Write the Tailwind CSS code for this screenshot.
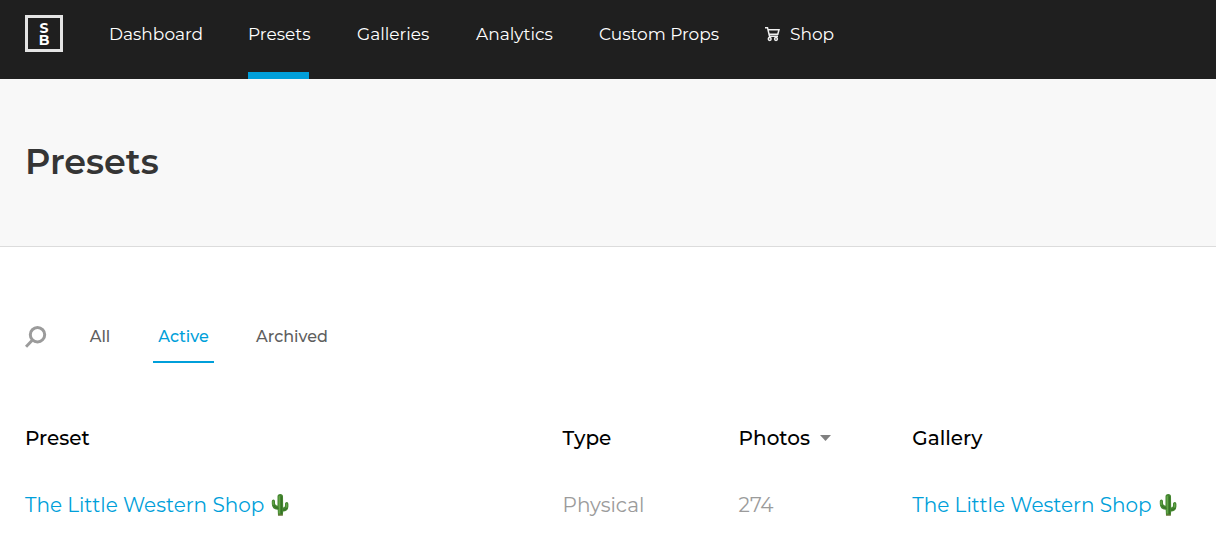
<!DOCTYPE html>
<html lang="en">
<head>
    <meta charset="UTF-8">
    <meta name="viewport" content="width=device-width, initial-scale=1.0">
    <script src="https://cdn.jsdelivr.net/npm/@tailwindcss/browser@4"></script>
    <title>Presets</title>
</head>
<body class="bg-white font-[Montserrat,Inter,sans-serif] text-black">
    <svg class="hidden">
        <symbol id="cactus" viewBox="0 0 18 24">
            <path d="M6.500 3.500Q6.500 1 9.200 1Q12 1 12 3.500L12.200 14.500Q14 14.300 14 12.500V10.500Q14.300 9 15.800 9Q17.400 9.200 17.400 11V13.500Q17.200 18 12.200 18.500L11.800 22.500H7L6.700 16.700Q1 16.500 0.800 11V8Q1 6.500 2.400 6.500Q4 6.700 4 8.300V10.500Q4.200 12.500 6.500 12.700Z" fill="#43852f"/>
            <path d="M8.300 20V3.500M2.200 11.500V8.500M15.600 14V11" fill="none" stroke="#62a548" stroke-width="1.400" stroke-linecap="round"/>
            <path d="M10.500 21V4M7.300 15.300Q4 15 3 13M12.500 17Q14.500 16.800 15.800 15.300" fill="none" stroke="#346f25" stroke-width="0.900" stroke-linecap="round"/>
            <path d="M7 22H11.800" stroke="#756f3c" stroke-width="1"/>
        </symbol>
    </svg>

    <header class="flex h-[79px] bg-[#1f1f1f] pl-[25px] text-[17px] text-white">
        <a href="#" aria-label="Home" class="mt-[15px] mr-[46px] flex h-[37px] w-[38px] flex-col items-center justify-center border-[3px] border-[#e4e4e4] text-[14px] leading-[12px] font-bold">
            <span>S</span>
            <span>B</span>
        </a>
        <nav class="flex gap-12 leading-[68px]">
            <a href="#" class="w-[91px]">Dashboard</a>
            <a href="#" class="w-[61px] border-b-[7px] border-[#009fda]">Presets</a>
            <a href="#" class="w-[71px]">Galleries</a>
            <a href="#" class="w-[75px]">Analytics</a>
            <a href="#" class="w-[118px] whitespace-nowrap">Custom Props</a>
            <a href="#" class="flex gap-[9px]">
                <svg class="mt-[26px] h-4 w-4" viewBox="0 0 16 16" fill="none" stroke="#f0f0f0" stroke-width="1.500">
                    <path d="M0 1.700H2.500L4.500 10.200H13M3 3.700H14L12.800 8.200H4"/>
                    <circle cx="4.700" cy="13" r="1.400"/>
                    <circle cx="11" cy="13" r="1.400"/>
                </svg>
                Shop
            </a>
        </nav>
    </header>

    <section class="flex h-[168px] items-center border-b border-[#dcdcdc] bg-[#f8f8f8] px-[25px] pb-[2px]">
        <h1 class="text-[35px] leading-[44px] font-semibold text-[#353535]">Presets</h1>
    </section>

    <main class="px-[25px] pt-[64px]">
        <div class="flex text-[16px] leading-[48px] font-medium text-[#5e5e5e]">
            <button type="button" aria-label="Search" class="mr-[38px]">
                <svg class="h-[22px] w-[22px]" viewBox="0 0 22 22" fill="none" stroke="#9b9b9b" stroke-width="3">
                    <circle cx="12.500" cy="8.700" r="7.200"/>
                    <path d="M7.500 14L1 20.800"/>
                </svg>
            </button>
            <button type="button" class="w-[30px]">All</button>
            <button type="button" class="mx-[38px] w-[61px] border-y-2 border-t-transparent border-b-[#009fda] text-[#009fda]">Active</button>
            <button type="button" class="w-[80px]">Archived</button>
        </div>

        <table class="mt-[41px] w-full table-fixed text-left text-[20px] whitespace-nowrap">
            <thead>
                <tr class="h-[67px]">
                    <th class="w-[46.100%] font-medium">Preset</th>
                    <th class="w-[15.100%] font-medium">Type</th>
                    <th class="w-[14.900%] font-medium">
                        <button type="button" class="flex items-center gap-[10px]">
                            Photos
                            <svg class="h-[6px] w-[11px]" viewBox="0 0 11 6"><path d="M0 0H11L5.500 6Z" fill="#808080"/></svg>
                        </button>
                    </th>
                    <th class="font-medium">Gallery</th>
                </tr>
            </thead>
            <tbody>
                <tr class="h-[67px] text-[#9b9b9b]">
                    <td>
                        <a href="#" class="flex items-center gap-[7px] text-[#009fda]">
                            The Little Western Shop
                            <svg class="h-6 w-[18px]"><use href="#cactus"/></svg>
                        </a>
                    </td>
                    <td>Physical</td>
                    <td>274</td>
                    <td>
                        <a href="#" class="flex items-center gap-[7px] text-[#009fda]">
                            The Little Western Shop
                            <svg class="h-6 w-[18px]"><use href="#cactus"/></svg>
                        </a>
                    </td>
                </tr>
            </tbody>
        </table>
    </main>
</body>
</html>
